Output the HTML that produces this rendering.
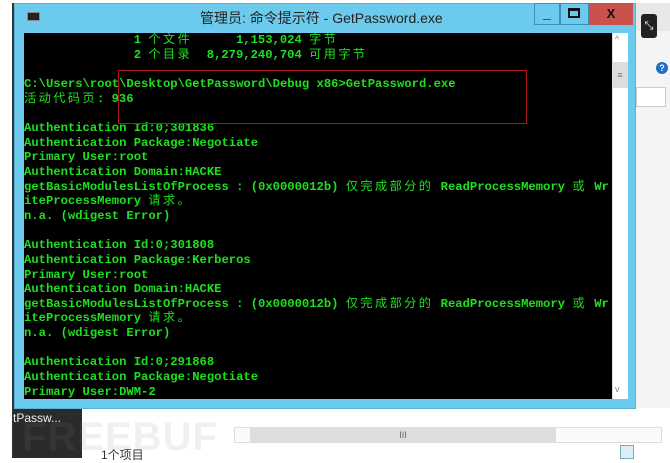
<!DOCTYPE html>
<html><head><meta charset="utf-8"><style>
*{margin:0;padding:0;box-sizing:border-box}
body{width:670px;height:461px;background:#fff;position:relative;overflow:hidden;font-family:"Liberation Sans","Noto Sans CJK SC",sans-serif}
.abs{position:absolute}
.con{position:absolute;left:24px;top:33px;width:588px;height:366px;background:#000;overflow:hidden}
pre{font-family:"Liberation Mono","Noto Sans CJK SC",monospace;font-size:12.2px;line-height:14.65px;color:#1fe01f;font-weight:bold;white-space:pre}
pre b{font-weight:normal;letter-spacing:2.4px}
</style></head><body>
<div class="abs" style="left:12px;top:3px;width:4px;height:455px;background:#333"></div>
<div class="abs" style="left:13px;top:408px;width:69px;height:50px;background:#2b2b2b"></div>
<div class="abs" style="left:13px;top:411px;color:#eee;font-size:12px">tPassw...</div>
<div class="abs" style="left:636px;top:3px;width:34px;height:455px;background:#f4f4f4"></div>
<div class="abs" style="left:636px;top:3px;width:34px;height:28px;background:#e8e8e8"></div>
<div class="abs" style="left:641px;top:14px;width:16px;height:24px;background:#222;border-radius:3px;color:#fff;font-size:11px;text-align:center;line-height:24px">⤡</div>
<div class="abs" style="left:656px;top:62px;width:12px;height:12px;border-radius:50%;background:#1f6fc5;color:#fff;font-size:9px;text-align:center;line-height:12px;font-weight:bold">?</div>
<div class="abs" style="left:636px;top:87px;width:30px;height:20px;border:1px solid #ccc;background:#fff"></div>
<div class="abs" style="left:82px;top:408px;width:588px;height:50px;background:#fff"></div>
<div class="abs" style="left:22px;top:415px;font-size:40px;font-weight:bold;color:rgba(128,128,128,0.12);letter-spacing:1px">FREEBUF</div>
<div class="abs" style="left:234px;top:427px;width:428px;height:16px;border:1px solid #ddd;background:#fafafa"></div>
<div class="abs" style="left:250px;top:428px;width:306px;height:14px;background:#ddd;font-size:9px;color:#666;text-align:center;line-height:14px">III</div>
<div class="abs" style="left:101px;top:446px;font-size:12px;color:#333">1个项目</div>
<div class="abs" style="left:620px;top:445px;width:14px;height:14px;border:1px solid #7ab;background:#dbeefa"></div>
<div class="abs" style="left:14px;top:3px;width:622px;height:406px;background:#6ccbed;border:1px solid #58b3d6"></div>
<div class="abs" style="left:27px;top:12px;width:13px;height:9px;background:#222;border:1px solid #888"></div>
<div class="abs" style="left:200px;top:8px;font-size:14px;color:#222">管理员: 命令提示符 - GetPassword.exe</div>
<div class="abs" style="left:534px;top:3px;width:26px;height:22px;background:#6ccbed;border:1px solid #3b8fb5;font-size:14px;text-align:center;line-height:18px;font-weight:bold">_</div>
<div class="abs" style="left:560px;top:3px;width:29px;height:22px;border:1px solid #3b8fb5"></div>
<div class="abs" style="left:568px;top:8px;width:12px;height:10px;border:2px solid #111;border-top-width:3px"></div>
<div class="abs" style="left:589px;top:3px;width:44px;height:22px;background:#c9524c;text-align:center;font-size:13px;font-weight:bold;line-height:22px;color:#111">X</div>
<div class="abs" style="left:612px;top:33px;width:16px;height:366px;background:#fff;border-left:1px solid #ddd"></div>
<div class="abs" style="left:612px;top:62px;width:16px;height:26px;background:#ddd;font-size:9px;color:#777;text-align:center;line-height:26px">≡</div>
<div class="abs" style="left:615px;top:34px;font-size:9px;color:#888">^</div>
<div class="abs" style="left:615px;top:384px;font-size:9px;color:#888">v</div>
<div class="con"><pre>               1 <b>个文件</b>      1,153,024 <b>字节</b>
               2 <b>个目录</b>  8,279,240,704 <b>可用字节</b>

C:\Users\root\Desktop\GetPassword\Debug x86>GetPassword.exe
<b>活动代码页</b>: 936

Authentication Id:0;301836
Authentication Package:Negotiate
Primary User:root
Authentication Domain:HACKE
getBasicModulesListOfProcess : (0x0000012b) <b>仅完成部分的</b> ReadProcessMemory <b>或</b> Wr
iteProcessMemory <b>请求。</b>
n.a. (wdigest Error)

Authentication Id:0;301808
Authentication Package:Kerberos
Primary User:root
Authentication Domain:HACKE
getBasicModulesListOfProcess : (0x0000012b) <b>仅完成部分的</b> ReadProcessMemory <b>或</b> Wr
iteProcessMemory <b>请求。</b>
n.a. (wdigest Error)

Authentication Id:0;291868
Authentication Package:Negotiate
Primary User:DWM-2</pre></div>
<div class="abs" style="left:118px;top:70px;width:409px;height:54px;border:1px solid #b01818"></div>
</body></html>
